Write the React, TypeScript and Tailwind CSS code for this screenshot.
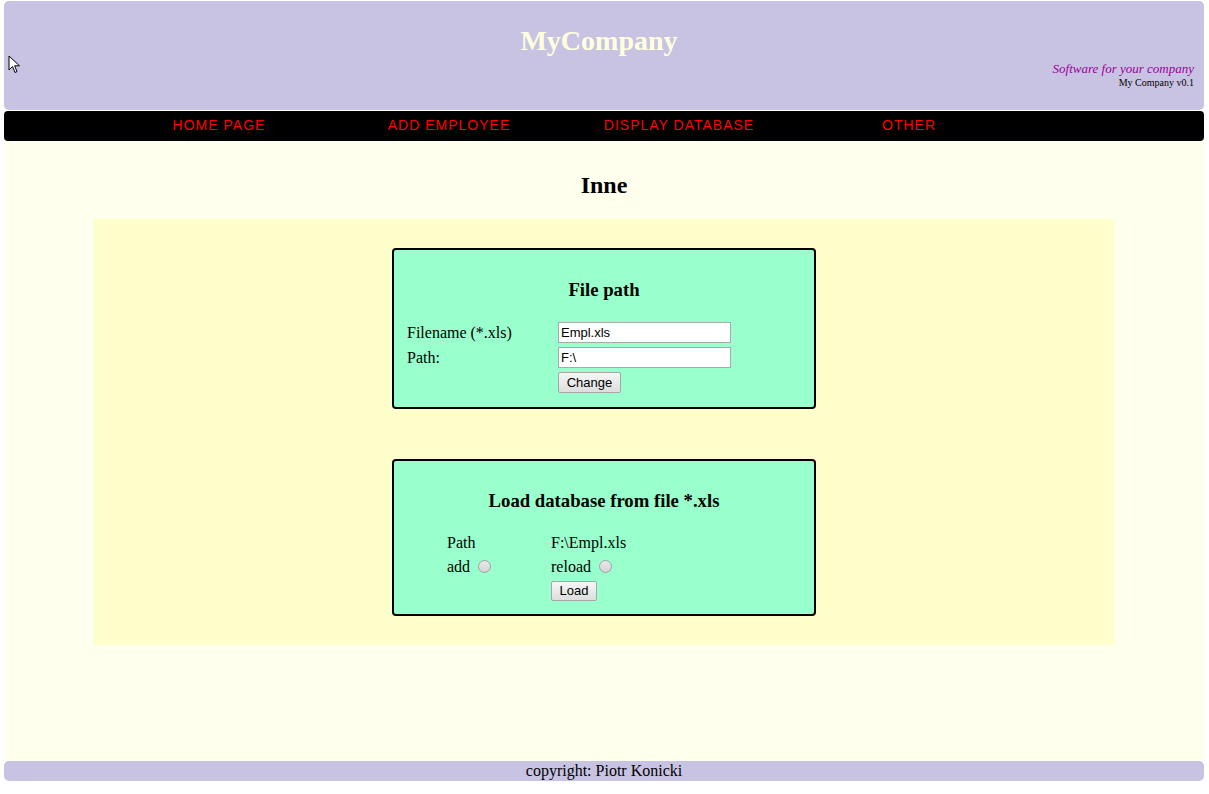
import React from 'react'

const navLinks = ['HOME PAGE', 'ADD EMPLOYEE', 'DISPLAY DATABASE', 'OTHER']

const Radio = () => (
  <span className="ml-[8px] inline-block h-[13px] w-[13px] rounded-full border border-[#a0a0a0] bg-gradient-to-b from-[#e8e8e8] to-[#d4d4d4] align-[-1px]" />
)

const Button = ({ label, width, height }: { label: string; width: string; height: string }) => (
  <button
    className={`block ${width} ${height} rounded-[2px] border border-[#a6a6a6] bg-gradient-to-b from-[#f6f6f6] to-[#dedede] text-[13px] leading-[18px] text-black font-['Liberation_Sans',Arial,sans-serif]`}
  >
    {label}
  </button>
)

const TextInput = ({ value }: { value: string }) => (
  <input
    readOnly
    value={value}
    className="block h-[21px] w-[173px] border border-[#a9a9a9] bg-white px-[2px] text-[13px] text-black outline-none font-['Liberation_Sans',Arial,sans-serif]"
  />
)

const Card = ({ title, children }: { title: string; children: React.ReactNode }) => (
  <div className="mx-auto w-[424px] rounded-[4px] border-2 border-black bg-[#99ffcc] pt-[29px]">
    <h3 className="text-center text-[18.72px] font-bold leading-[22px]">{title}</h3>
    {children}
  </div>
)

export default function App() {
  return (
    <div className="relative min-h-[794px] bg-white font-['Liberation_Serif','Times_New_Roman',serif] text-black">
      <div className="ml-[4px] w-[1200px] pt-px">
        {/* header */}
        <header className="flex h-[109px] flex-col rounded-[5px] bg-[#c9c3e3] pt-[24px]">
          <h1 className="pr-[10px] text-center text-[28px] font-bold leading-[32px] text-[#ffffdd]">MyCompany</h1>
          <p className="mt-[5px] pr-[10px] text-right text-[13px] italic leading-[14px] text-[#990099]">
            Software for your company
          </p>
          <p className="pr-[10px] text-right text-[10px] leading-[13px]">My Company v0.1</p>
        </header>

        {/* navigation */}
        <nav className="mt-px flex h-[30px] rounded-[4px] bg-black pl-[100px]">
          {navLinks.map((link) => (
            <a
              key={link}
              href="#"
              className="w-[230px] pb-[2px] text-center text-[14px] leading-[28px] tracking-[1px] text-[#ff0000] font-['Liberation_Sans',Arial,sans-serif]"
            >
              {link}
            </a>
          ))}
        </nav>

        {/* content */}
        <main className="h-[620px] bg-[#ffffee] pt-[30px]">
          <h2 className="text-center text-[24px] font-bold leading-[28px]">Inne</h2>
          <div className="mx-auto mt-[20px] w-[1020px] bg-[#ffffcc] pb-[29px] pt-[29px]">
            <Card title="File path">
              <div className="mt-[21px] grid grid-cols-[151px_auto] grid-rows-[21px_21px_21px] gap-y-[4px] pb-[14px] pl-[13px] text-[16px] leading-[21px]">
                <span>Filename (*.xls)</span>
                <TextInput value="Empl.xls" />
                <span>Path:</span>
                <TextInput value="F:\" />
                <span />
                <Button label="Change" width="w-[63px]" height="h-[21px]" />
              </div>
            </Card>

            <div className="h-[50px]" />

            <Card title="Load database from file *.xls">
              <div className="mt-[19px] grid grid-cols-[104px_auto] grid-rows-[24px_24px_auto] pb-[13px] pl-[53px] text-[16px] leading-[24px]">
                <span>Path</span>
                <span>F:\Empl.xls</span>
                <span>
                  add
                  <Radio />
                </span>
                <span>
                  reload
                  <Radio />
                </span>
                <span />
                <div className="pt-[2px]">
                  <Button label="Load" width="w-[46px]" height="h-[20px]" />
                </div>
              </div>
            </Card>
          </div>
        </main>

        {/* footer */}
        <footer className="h-[20px] rounded-[5px] bg-[#c9c3e3] text-center text-[16px] leading-[20px]">
          copyright: Piotr Konicki
        </footer>
      </div>

      {/* mouse pointer captured in the screenshot */}
      <svg className="absolute left-[8px] top-[55px]" width="13" height="20" viewBox="0 0 13 20">
        <path d="M1 1 L1 15 L4.5 11.5 L7 17.5 L9 16.6 L6.6 10.8 L11.5 10.8 Z" fill="white" stroke="black" strokeWidth="1" strokeLinejoin="round" />
      </svg>
    </div>
  )
}
